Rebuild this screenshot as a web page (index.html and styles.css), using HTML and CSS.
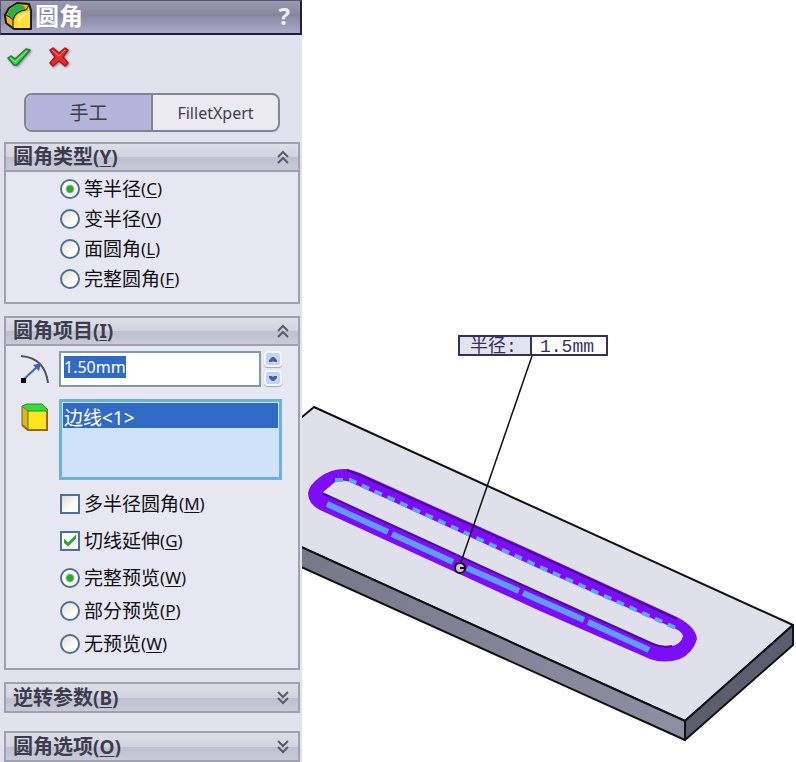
FILE: index.html
```
<!DOCTYPE html>
<html lang="zh-CN">
<head>
  <meta charset="UTF-8">
  <meta name="viewport" content="width=device-width, initial-scale=1">
  <title>圆角</title>
  <link rel="stylesheet" href="styles.css">
</head>
<body>

<aside class="panel">
  <header class="titlebar">
    <svg class="title-icon" width="28" height="28" viewBox="0 0 28 28" aria-hidden="true">
      <path d="M1 13 L5 6 L13 1 L25 2 L27 8 V27 H10 L2 21 Z" fill="#f3b41f" stroke="#1b1a10" stroke-width="2" stroke-linejoin="round"/>
      <path d="M3 13 Q6 4 14 2 L20 4 L22 8 Q12 9 9 18 Z" fill="#2eae3e"/>
      <path d="M2 13 Q6 15 9 18 Q11 9 22 8 L25 3 M9 18 V26" fill="none" stroke="#1b1a10" stroke-width="1"/>
      <path d="M10 26 Q9 17 14 13 Q19 9 26 9 V26 Z" fill="#ffdf38"/>
      <path d="M14 20 Q17 13 24 12" fill="none" stroke="#fff3a0" stroke-width="2"/>
    </svg>
    <h1>圆角</h1>
    <button class="help" type="button" aria-label="帮助">?</button>
  </header>

  <div class="actions">
    <button type="button" aria-label="确定">
      <svg width="26" height="22" viewBox="0 0 26 22">
        <path d="M2 12 L5 10 L9 13 L20 3 L24 4 L11 19 L8 19 Z" fill="#3fce4a" stroke="#22802b" stroke-width="1.5" stroke-linejoin="round"/>
        <path d="M4 12 L9 16 L21 5" fill="none" stroke="#8df08f" stroke-width="1"/>
      </svg>
    </button>
    <button type="button" aria-label="取消">
      <svg width="22" height="22" viewBox="0 0 22 22">
        <path d="M2 4 L5 2 L11 7 L17 2 L20 4 L15 11 L20 17 L17 20 L11 15 L5 20 L2 17 L7 11 Z" fill="#e62c2c" stroke="#a81c1c" stroke-width="1.5" stroke-linejoin="round"/>
        <path d="M4 4 L11 10 L17 4" fill="none" stroke="#ff8a80" stroke-width="1"/>
      </svg>
    </button>
  </div>

  <nav class="tabs">
    <button class="active" type="button">手工</button>
    <button type="button">FilletXpert</button>
  </nav>

  <section class="group">
    <h2><button type="button">圆角类型<span class="key">(<u>Y</u>)</span>
      <svg width="14" height="14" viewBox="0 0 14 14"><path d="M2 7 L7 2 L12 7 M2 13 L7 8 L12 13"/></svg></button></h2>
    <div class="group-body types">
      <label><input type="radio" name="type" checked>等半径<span class="key">(<u>C</u>)</span></label>
      <label><input type="radio" name="type">变半径<span class="key">(<u>V</u>)</span></label>
      <label><input type="radio" name="type">面圆角<span class="key">(<u>L</u>)</span></label>
      <label><input type="radio" name="type">完整圆角<span class="key">(<u>F</u>)</span></label>
    </div>
  </section>

  <section class="group">
    <h2><button type="button">圆角项目<span class="key">(<u>I</u>)</span>
      <svg width="14" height="14" viewBox="0 0 14 14"><path d="M2 7 L7 2 L12 7 M2 13 L7 8 L12 13"/></svg></button></h2>
    <div class="group-body">
      <div class="field">
        <svg class="field-icon" width="32" height="32" viewBox="0 0 32 32" aria-hidden="true">
          <path d="M2 5 Q26 7 29 32" fill="none" stroke="#55525c" stroke-width="2"/>
          <path d="M4 29 L19 15" stroke="#3f62b8" stroke-width="2"/>
          <path d="M22 12 L20 20 L14 14 Z" fill="#3f62b8"/>
          <rect x="2" y="27" width="5" height="5" fill="#000"/>
        </svg>
        <input class="radius" id="radius" type="text" value="1.50mm" aria-label="半径">
        <div class="spin">
          <button type="button" aria-label="增加"><svg width="8" height="5" viewBox="0 0 8 5"><path d="M0 5 V3 L3 0 H5 L8 3 V5 H5 L4 4 L3 5 Z"/></svg></button>
          <button type="button" aria-label="减少"><svg width="8" height="5" viewBox="0 0 8 5"><path d="M0 0 V2 L3 5 H5 L8 2 V0 H5 L4 1 L3 0 Z"/></svg></button>
        </div>
      </div>

      <div class="field">
        <svg class="field-icon" width="32" height="32" viewBox="0 0 32 32" aria-hidden="true">
          <path d="M3 7 L9 12 V32 L3 26 Z" fill="#f2a91c"/>
          <path d="M3 7 L8 5 H23 L29 10 V12 H9 Z" fill="#35dd3c"/>
          <path d="M9 12 H29 V32 H9 Z" fill="#ffe51c"/>
          <path d="M3 26 V7 L8 5 H23 L29 11 M3 7 L9 12 H29 M9 12 V31" fill="none" stroke="#2d8a20" stroke-width="1"/>
          <path d="M3 26 L9 31 H28 V12" fill="none" stroke="#9a6410" stroke-width="2"/>
        </svg>
        <select class="edges" size="3" aria-label="边线">
          <option selected>边线&lt;1&gt;</option>
        </select>
      </div>

      <div class="checks">
        <label><input type="checkbox">多半径圆角<span class="key">(<u>M</u>)</span></label>
        <label><input type="checkbox" checked>切线延伸<span class="key">(<u>G</u>)</span></label>
      </div>
      <div class="previews">
        <label><input type="radio" name="preview" checked>完整预览<span class="key">(<u>W</u>)</span></label>
        <label><input type="radio" name="preview">部分预览<span class="key">(<u>P</u>)</span></label>
        <label><input type="radio" name="preview">无预览<span class="key">(<u>W</u>)</span></label>
      </div>
    </div>
  </section>

  <section class="group closed">
    <h2><button type="button">逆转参数<span class="key">(<u>B</u>)</span>
      <svg width="14" height="14" viewBox="0 0 14 14"><path d="M2 1 L7 6 L12 1 M2 7 L7 12 L12 7"/></svg></button></h2>
  </section>

  <section class="group closed">
    <h2><button type="button">圆角选项<span class="key">(<u>O</u>)</span>
      <svg width="14" height="14" viewBox="0 0 14 14"><path d="M2 1 L7 6 L12 1 M2 7 L7 12 L12 7"/></svg></button></h2>
  </section>
</aside>

<main class="model">
  <svg viewBox="302 0 494 762" preserveAspectRatio="xMinYMin meet">
    <defs>
      <linearGradient id="front" x1="0" y1="0" x2="1" y2="0">
        <stop offset="0" stop-color="#77778a"/>
        <stop offset="1" stop-color="#8f8fa4"/>
      </linearGradient>
    </defs>

    <!-- plate -->
    <g stroke="#111" stroke-width="2" stroke-linejoin="round">
      <path d="M290 427 L314 407 L793 625 L685 721 L290 542 Z" fill="#e0e0ea"/>
      <path d="M290 542 L685 721 V740 L290 562 Z" fill="url(#front)"/>
      <path d="M685 721 L793 625 V645 L685 740 Z" fill="#5b5f6d"/>
    </g>

    <!-- slot with the fillet preview -->
    <path class="slot" fill-rule="evenodd" d="M308 493 Q309 485 320 477 Q332 468 347 469 Q352 470 360 473 L540 554 L677 617 Q696 627 697 639 Q693 653 680 659 Q664 664 650 659 L540 611 L320 510 Q308 504 308 493 Z
      M322 493 L335 482 Q342 479 350 482 L540 569 L676 629 Q682 632 683 636 Q681 644 672 646 Q662 648 653 644 L540 593 Z"/>
    <path class="slot-edge" d="M322 493 L540 593 L653 644 Q662 648 672 646"/>
    <path class="slot-edge" d="M347 470 L360 475 L540 556 L677 619"/>
    <path class="dashes" d="M335 480 L350 480 L540 567 L678 629"/>
    <path class="strip" d="M327 504 L388 532 M392 534 L453 562 M467 568 L519 591 M523 593 L584 620 M588 622 L649 650"/>

    <!-- callout -->
    <path d="M532 356 L461 562" stroke="#111" stroke-width="1.5"/>
    <circle cx="460" cy="568" r="5" fill="#c9c9d4" stroke="#111" stroke-width="2"/>
    <path d="M460 568 H465" stroke="#111" stroke-width="2"/>
    <g stroke="#35305c" stroke-width="2">
      <rect x="459" y="336" width="72" height="19" fill="#e3e3ee"/>
      <rect x="531" y="336" width="76" height="19" fill="#fff"/>
    </g>
    <text class="callout" x="470" y="352">半径:</text>
    <text class="callout" x="540" y="352">1.5mm</text>
  </svg>
</main>

<script>
  const radius = document.getElementById('radius');
  radius.focus();
  radius.select();
</script>

</body>
</html>
```

FILE: styles.css
```
* {
  box-sizing: border-box;
}
body {
  margin: 0;
  display: flex;
  align-items: flex-start;
  min-height: 100vh;
  background: #fff;
  color: #111;
  font-family: "Noto Sans", "Noto Sans CJK SC", sans-serif;
  font-size: 19px;
  line-height: 24px;
}
button {
  font: inherit;
  color: inherit;
  margin: 0;
  padding: 0;
  border: none;
  background: none;
  cursor: pointer;
}
svg {
  display: block;
}
.key {
  font-size: 17px;
}
u {
  text-underline-offset: 2px;
}

.panel {
  flex: 0 0 302px;
  min-width: 0;
  background: #e1e2ec;
}
.titlebar {
  display: flex;
  align-items: center;
  height: 35px;
  padding: 0 10px 2px 3px;
  border: 1px solid #55556e;
  border-bottom: 2px solid #20203c;
  border-right: 2px solid #20203c;
  background: linear-gradient(#9a9ab2 0, #85859f 45%, #8f8fab 55%, #a8a8c8);
  color: #fff;
}
.titlebar h1 {
  flex: 1;
  margin: 0 0 0 3px;
  font-size: 24px;
  line-height: 28px;
}
.help {
  font-size: 24px;
  font-weight: bold;
  color: #ececf2;
}
.actions {
  display: flex;
  gap: 16px;
  padding: 11px 6px;
}
.actions svg {
  filter: drop-shadow(1px 1px 1px #8888a0);
}
.tabs {
  display: flex;
  height: 39px;
  margin: 14px 22px 10px 24px;
  border: 2px solid #85858f;
  border-radius: 8px;
  overflow: hidden;
  background: #eaeaf0;
}
.tabs button {
  flex: 1;
  font-size: 16px;
  color: #3f3f4c;
}
.tabs .active {
  font-size: 19px;
  background: #b5b5dc;
  border-right: 2px solid #85858f;
}

/* collapsible groups */
.group {
  margin: 0 2px 12px 4px;
  border: 2px solid #a0a1af;
  background: #e7e7f1;
}
.group h2 {
  margin: 0;
  font-size: 20px;
}
.group h2 button {
  display: flex;
  align-items: center;
  width: 100%;
  height: 28px;
  padding: 0 8px 0 7px;
  border-bottom: 2px solid #a0a1af;
  background: linear-gradient(#dddee6 0, #d2d3de 50%, #bfc0cf 51%, #c9cad8);
  font-weight: bold;
  color: #3c3c4e;
}
.group h2 svg {
  margin-left: auto;
  fill: none;
  stroke: #5a5a68;
  stroke-width: 2;
}
.group h2 .key {
  font-size: 19px;
}
.closed {
  margin-bottom: 18px;
}
.closed:last-child {
  margin-bottom: 0;
}
.closed h2 button {
  height: 27px;
  border-bottom: none;
}
.group-body label {
  display: flex;
  align-items: center;
  height: 30px;
  margin-left: 54px;
}
.types {
  padding: 2px 0 8px;
}

input[type="radio"],
input[type="checkbox"] {
  appearance: none;
  flex: none;
  width: 20px;
  height: 20px;
  margin: 0 4px 0 0;
  border: 2px solid #4f7096;
  background: linear-gradient(135deg, #dfdfd6, #fff 70%);
}
input[type="radio"] {
  border-radius: 50%;
}
input[type="radio"]:checked {
  background: radial-gradient(circle, #2fa52b 0 3px, #fff 5px);
}
input[type="checkbox"]:checked {
  background: #fff;
  display: grid;
  place-items: center;
}
input[type="checkbox"]:checked::before {
  content: "";
  width: 12px;
  height: 12px;
  background: #2fa52b;
  clip-path: polygon(0 35%, 35% 65%, 100% 0, 100% 35%, 35% 100%, 0 70%);
}

.field {
  display: flex;
  align-items: flex-start;
  padding: 5px 16px 0 13px;
  margin-bottom: 7px;
}
.field-icon {
  flex: none;
  margin-right: 8px;
}
.radius {
  flex: 1;
  min-width: 0;
  height: 36px;
  padding: 0 3px 4px;
  border: 2px solid #8599ad;
  border-radius: 0;
  outline: none;
  background: #fff;
  font: 16px/20px "Noto Sans", sans-serif;
}
.radius::selection {
  background: #316ac5;
  color: #fff;
}
.spin {
  display: flex;
  flex-direction: column;
  gap: 3px;
  margin-left: 3px;
}
.spin button {
  display: grid;
  place-items: center;
  width: 18px;
  height: 16px;
  border: 2px solid #f4f6fd;
  border-radius: 4px;
  background: #c3d3fb;
  box-shadow: 0 1px 1px #9aa8c8;
  fill: #4d6185;
}
.edges {
  appearance: none;
  flex: 1;
  min-width: 0;
  height: 81px;
  margin: 0;
  padding: 1px;
  border: 3px solid #6ab1e2;
  border-radius: 0;
  outline: none;
  overflow: hidden;
  background: #cfe3f8;
  font: inherit;
}
.edges option {
  height: 25px;
  min-height: 25px;
  padding: 0 1px;
  line-height: 20px;
}
.edges option:checked {
  background: linear-gradient(#316ac5, #316ac5);
  color: #fff;
}
.checks {
  margin-top: -2px;
}
.checks label {
  height: 37px;
}
.previews {
  padding: 2px 0 8px;
}
.previews label {
  height: 33px;
}

.model {
  flex: 1;
  min-width: 0;
}
.model svg {
  width: 100%;
}
.slot {
  fill: #7c0df5;
}
.slot-edge {
  fill: none;
  stroke: #4a0aa0;
  stroke-width: 2;
}
.dashes {
  fill: none;
  stroke: #63a4f5;
  stroke-width: 4;
  stroke-dasharray: 8 6;
}
.strip {
  fill: none;
  stroke: #5f9cf8;
  stroke-width: 6;
}
.callout {
  font-family: "Liberation Mono", "Noto Sans CJK SC", monospace;
  font-size: 18px;
  fill: #35305c;
}
```
